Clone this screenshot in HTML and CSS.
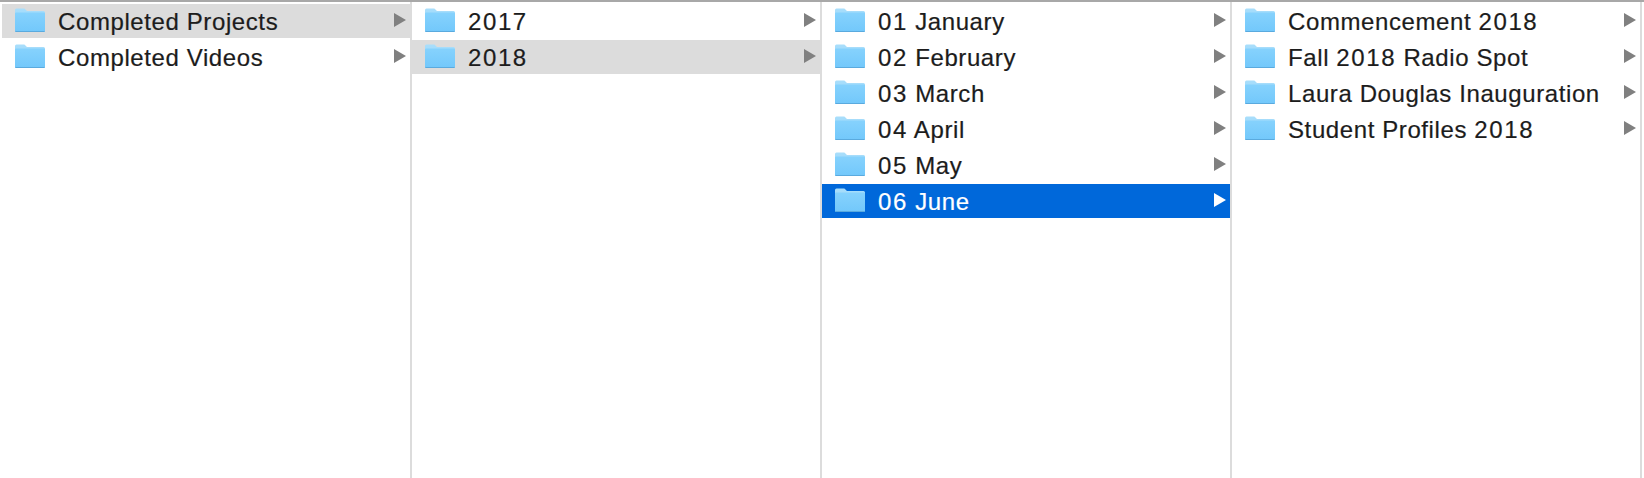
FILE: index.html
```html
<!DOCTYPE html>
<html lang="en">
<head>
    <meta charset="UTF-8">
    <meta name="viewport" content="width=device-width, initial-scale=1.0">
    <link rel="stylesheet" href="styles.css">
</head>
<body>
    <svg class="sprite" width="0" height="0">
        <defs>
            <linearGradient id="folder-back" x1="0" y1="0" x2="0" y2="1">
                <stop offset="0" stop-color="#a9defb"/>
                <stop offset="1" stop-color="#8fd3fb"/>
            </linearGradient>
            <linearGradient id="folder-front" x1="0" y1="0" x2="0" y2="1">
                <stop offset="0" stop-color="#86d2fd"/>
                <stop offset="1" stop-color="#72c8fb"/>
            </linearGradient>
            <symbol id="folder" viewBox="0 0 30 24">
                <path d="M1 23.500a1 1 0 0 1-1-1V2a1.500 1.500 0 0 1 1.500-1.500h7c1 0 1.500.4 2.200 1.200L12 3h16.500A1.500 1.500 0 0 1 30 4.500v18a1 1 0 0 1-1 1z" fill="url(#folder-back)"/>
                <path d="M0 5.500A1 1 0 0 1 1 4.500h28a1 1 0 0 1 1 1V22.500a1.500 1.500 0 0 1-1.500 1.500h-27A1.500 1.500 0 0 1 0 22.500z" fill="url(#folder-front)"/>
                <path d="M0 22.500V22.800A1.300 1.300 0 0 0 1.300 24h27.400a1.300 1.300 0 0 0 1.300-1.200V22.500a1 1 0 0 1-1 .6H1a1 1 0 0 1-1-.6z" fill="#5aaade"/>
            </symbol>
        </defs>
    </svg>

    <div class="browser">
        <ul class="column">
            <li class="row inactive"><svg class="folder"><use href="#folder"/></svg><span class="name">Completed Projects</span><i class="arrow"></i></li>
            <li class="row"><svg class="folder"><use href="#folder"/></svg><span class="name">Completed Videos</span><i class="arrow"></i></li>
        </ul>
        <ul class="column">
            <li class="row"><svg class="folder"><use href="#folder"/></svg><span class="name"><span class="num">2017</span></span><i class="arrow"></i></li>
            <li class="row inactive"><svg class="folder"><use href="#folder"/></svg><span class="name"><span class="num">2018</span></span><i class="arrow"></i></li>
        </ul>
        <ul class="column">
            <li class="row"><svg class="folder"><use href="#folder"/></svg><span class="name"><span class="num">01</span> January</span><i class="arrow"></i></li>
            <li class="row"><svg class="folder"><use href="#folder"/></svg><span class="name"><span class="num">02</span> February</span><i class="arrow"></i></li>
            <li class="row"><svg class="folder"><use href="#folder"/></svg><span class="name"><span class="num">03</span> March</span><i class="arrow"></i></li>
            <li class="row"><svg class="folder"><use href="#folder"/></svg><span class="name"><span class="num">04</span> April</span><i class="arrow"></i></li>
            <li class="row"><svg class="folder"><use href="#folder"/></svg><span class="name"><span class="num">05</span> May</span><i class="arrow"></i></li>
            <li class="row selected"><svg class="folder"><use href="#folder"/></svg><span class="name"><span class="num">06</span> June</span><i class="arrow"></i></li>
        </ul>
        <ul class="column">
            <li class="row"><svg class="folder"><use href="#folder"/></svg><span class="name">Commencement <span class="num">2018</span></span><i class="arrow"></i></li>
            <li class="row"><svg class="folder"><use href="#folder"/></svg><span class="name">Fall <span class="num">2018</span> Radio Spot</span><i class="arrow"></i></li>
            <li class="row"><svg class="folder"><use href="#folder"/></svg><span class="name">Laura Douglas Inauguration</span><i class="arrow"></i></li>
            <li class="row"><svg class="folder"><use href="#folder"/></svg><span class="name">Student Profiles <span class="num">2018</span></span><i class="arrow"></i></li>
        </ul>
    </div>
</body>
</html>
```

FILE: styles.css
```css
html, body {
    height: 100%;
}
body {
    margin: 0;
    background: #fff;
    overflow: hidden;
    font-family: "Liberation Sans", Arial, sans-serif;
    font-size: 24px;
    color: #1c1c1c;
}
.sprite {
    display: block;
}
.browser {
    height: 100%;
    box-sizing: border-box;
    border-top: 2px solid #a8a8a8;
    display: grid;
    grid-template-columns: 412px 410px 410px 410px;
}
.column {
    list-style: none;
    margin: 0;
    padding: 2px 0 0;
    border-right: 2px solid #dcdcdc;
    display: flex;
    flex-direction: column;
    gap: 2px;
}
.column:first-child {
    padding-left: 2px;
}
.row {
    height: 34px;
    padding: 0 4px 0 13px;
    display: flex;
    align-items: center;
}
.inactive {
    background: #dcdcdc;
}
.selected {
    background: #0068da;
    color: #fff;
}
.folder {
    width: 30px;
    height: 24px;
    flex: none;
    margin: -2px 13px 0 0;
}
.name {
    flex: 1;
    white-space: nowrap;
    letter-spacing: 0.6px;
    padding-top: 2px;
    -webkit-text-stroke: 0.2px currentColor;
}
.num {
    letter-spacing: 1.6px;
}
.arrow {
    flex: none;
    margin-top: -2px;
    border-left: 12px solid #808080;
    border-top: 7px solid transparent;
    border-bottom: 7px solid transparent;
}
.selected .arrow {
    border-left-color: #fff;
}
```
